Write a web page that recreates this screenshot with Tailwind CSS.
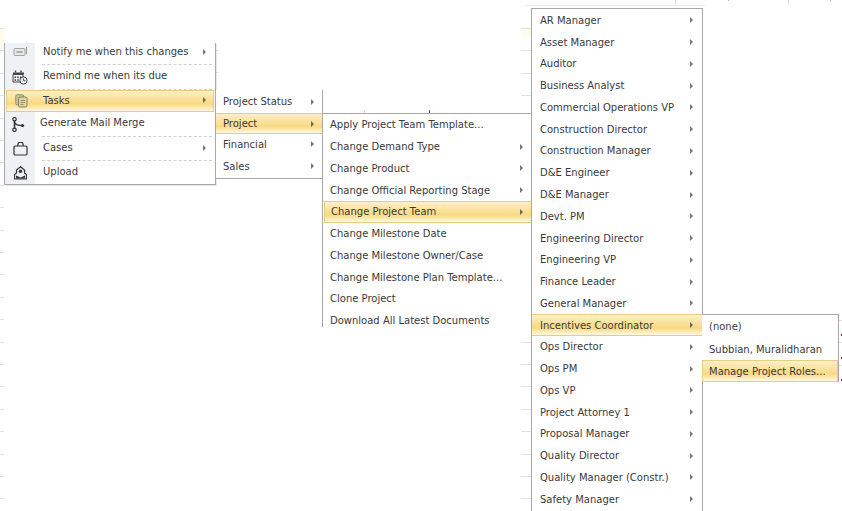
<!DOCTYPE html>
<html lang="en">
<head>
    <meta charset="UTF-8">
    <title>Context Menu</title>
    <script src="https://cdn.jsdelivr.net/npm/@tailwindcss/browser@4"></script>
</head>
<body class="bg-white w-[842px] h-[511px] overflow-hidden relative font-['DejaVu_Sans',sans-serif] text-[10px] text-[#3a3a3a]">

    <!-- bits of the grid behind the menus -->
    <div class="absolute left-0 top-[27px] w-[4px] h-[16px] bg-[#fffbea]"></div>
    <div class="absolute left-[521px] top-[27px] w-[10px] h-[10px] bg-[#fffbea]"></div>
    <div class="absolute left-0 top-[28px] w-[4px] h-[483px] bg-[repeating-linear-gradient(to_bottom,#e2e2e2_0,#e2e2e2_1px,transparent_1px,transparent_22.4px)]"></div>
    <div class="absolute left-[521px] top-[28px] w-[11px] h-[483px] bg-[repeating-linear-gradient(to_bottom,#e2e2e2_0,#e2e2e2_1px,transparent_1px,transparent_22.4px)]"></div>
    <div class="absolute left-[215px] top-[50px] w-[4px] h-[40px] bg-[repeating-linear-gradient(to_bottom,#e8e8e8_0,#e8e8e8_1px,transparent_1px,transparent_22px)]"></div>
    <div class="absolute left-[525px] top-[5px] w-[180px] h-px bg-[#ececec]"></div>
    <div class="absolute left-[675px] top-0 w-px h-[5px] bg-[#e2e2e2]"></div>
    <div class="absolute left-[728px] top-0 w-px h-[1px] bg-[#bbb]"></div>
    <div class="absolute left-[788px] top-0 w-px h-[5px] bg-[#e2e2e2]"></div>
    <div class="absolute left-[830px] top-0 w-px h-[1px] bg-[#bbb]"></div>
    <div class="absolute left-[364px] top-[110px] w-px h-[3px] bg-[#d8d8d8]"></div>
    <div class="absolute left-[429px] top-[110px] w-px h-[3px] bg-[#555]"></div>
    <div class="absolute left-[838px] top-[320px] w-[4px] h-px bg-[#e2e2e2]"></div>
    <div class="absolute left-[838px] top-[342px] w-[4px] h-px bg-[#e2e2e2]"></div>
    <div class="absolute left-[838px] top-[365px] w-[4px] h-px bg-[#e2e2e2]"></div>
    <div class="absolute left-[841px] top-[334px] w-px h-[2px] bg-[#7a2030]"></div>
    <div class="absolute left-[841px] top-[357px] w-px h-[2px] bg-[#7a2030]"></div>
    <div class="absolute left-[841px] top-[379px] w-px h-[2px] bg-[#7a2030]"></div>

    <!-- first menu -->
    <div class="absolute left-[4px] top-[43px] w-[212px] h-[142px] bg-white border-x border-b border-[#a8a8a8] shadow-[1px_1px_1px_rgba(0,0,0,0.08)] flex flex-col">
        <div class="h-[22px] flex">
            <div class="w-[30px] bg-[#eff1f5] flex items-center justify-center pb-[3px]">
                <svg width="15" height="11" viewBox="0 0 15 11" class="mt-[-2px]"><rect x="1" y="2.5" width="11" height="7" rx="1" fill="#e6e6e6" stroke="#a5a5a5"/><path d="M3.5 6h6" stroke="#888" stroke-width="1.2"/><path d="M13.5 1v7" stroke="#999"/></svg>
            </div>
            <div class="flex-1 ml-[7px] mr-[3px] pl-[1px] pr-[6px] pb-[4px] flex items-center justify-between border-b border-dashed border-[#d0d0d0]">
                <span>Notify me when this changes</span><span class="border-y-[3px] border-l-[3px] border-y-transparent border-l-[#777]"></span>
            </div>
        </div>
        <div class="h-[25px] flex">
            <div class="w-[30px] bg-[#eff1f5] flex items-center justify-center">
                <svg width="16" height="15" viewBox="0 0 16 15"><path d="M3.5 0.5v2M9 0.5v2" stroke="#444" stroke-width="1.4"/><path d="M1 2.5h11v2H1z" fill="#444"/><path d="M1 4.5h10v7.5H1z" fill="none" stroke="#444"/><path d="M2.5 6.5h1.6v1.6H2.5zM5.2 6.5h1.6v1.6H5.2zM7.9 6.5h1.6v1.6H7.9zM2.5 9.2h1.6v1.6H2.5zM5.2 9.2h1.6v1.6H5.2z" fill="#444"/><circle cx="11.5" cy="10.5" r="3.6" fill="#eff1f5" stroke="#444"/><path d="M11.5 8.5v2.2h2" stroke="#444" fill="none" stroke-width="0.9"/></svg>
            </div>
            <div class="flex-1 ml-[7px] mr-[3px] pl-[1px] pb-[4px] flex items-center border-b border-dashed border-[#d0d0d0]">Remind me when its due</div>
        </div>
        <div class="h-[22px] flex ml-px mr-px border border-[#e8cc80] bg-gradient-to-b from-[#fcf0c6] via-[#f9d981] via-65% to-[#fff8e4]">
            <div class="w-[28px] flex items-center justify-center">
                <svg width="13" height="14" viewBox="0 0 13 14"><rect x="0.8" y="0.8" width="8" height="10" rx="1.5" fill="#cfc6a0" stroke="#8d8a72"/><rect x="3.5" y="3" width="8.5" height="10" rx="1.5" fill="#e6d49a" stroke="#7f7c68"/><path d="M5.5 6.5h4.500M5.5 8.500h4.500M5.500 10.500h3" stroke="#7f7c68" stroke-width="0.8"/></svg>
            </div>
            <div class="flex-1 pl-[8px] pr-[7px] pb-[2px] flex items-center justify-between">
                <span>Tasks</span><span class="border-y-[3px] border-l-[3px] border-y-transparent border-l-[#666]"></span>
            </div>
        </div>
        <div class="h-[24px] flex">
            <div class="w-[30px] bg-[#eff1f5] flex items-center justify-center pr-[3px]">
                <svg width="13" height="15" viewBox="0 0 13 15"><circle cx="2.500" cy="2.200" r="1.700" fill="none" stroke="#333" stroke-width="1.200"/><circle cx="2.500" cy="12.800" r="1.700" fill="none" stroke="#333" stroke-width="1.200"/><path d="M2.500 3.500v8" stroke="#333" stroke-width="1.600"/><path d="M2.500 5.500c1 2.500 4 3 7.500 3" stroke="#333" stroke-width="1.400" fill="none"/><circle cx="10.600" cy="8.600" r="1.500" fill="#333"/></svg>
            </div>
            <div class="flex-1 ml-[5px] flex items-center pb-[4px]">Generate Mail Merge</div>
        </div>
        <div class="h-[25px] flex">
            <div class="w-[30px] bg-[#eff1f5] flex items-center justify-center">
                <svg width="15" height="15" viewBox="0 0 15 15"><rect x="1" y="5" width="13" height="9" rx="1.200" fill="none" stroke="#333" stroke-width="1.200"/><path d="M4.500 5l1-3.500h4l1 3.500" fill="none" stroke="#333" stroke-width="1.200"/></svg>
            </div>
            <div class="flex-1 ml-[7px] mr-[3px] pl-[1px] pr-[6px] pb-[2px] flex items-center justify-between border-y border-dashed border-[#d0d0d0]">
                <span>Cases</span><span class="border-y-[3px] border-l-[3px] border-y-transparent border-l-[#777]"></span>
            </div>
        </div>
        <div class="h-[23px] flex">
            <div class="w-[30px] bg-[#eff1f5] flex items-center justify-center">
                <svg width="13" height="14" viewBox="0 0 13 14"><path d="M6.500 0.800L10.500 4v3l2 1.500V13H0.500V8.500L2.500 7V4z" fill="none" stroke="#333" stroke-width="1.200"/><circle cx="6.500" cy="5.200" r="1.700" fill="#333"/><path d="M2 9.500l4.500 2 4.500-2v3H2z" fill="#333"/></svg>
            </div>
            <div class="flex-1 ml-[7px] pl-[1px] flex items-center pb-[3px]">Upload</div>
        </div>
    </div>

    <!-- second menu -->
    <div class="absolute left-[216px] top-[90px] w-[107px] h-[89px] bg-white border-r border-b border-[#a8a8a8] flex flex-col">
        <div class="h-[23px] flex items-center pl-[7px] pr-[8px] justify-between"><span>Project Status</span><span class="border-y-[3px] border-l-[3px] border-y-transparent border-l-[#777]"></span></div>
        <div class="h-[21px] flex items-center pl-[7px] pr-[8px] justify-between border-y border-[#e8cc80] bg-gradient-to-b from-[#fcf0c6] via-[#f9d981] via-65% to-[#fff8e4]"><span>Project</span><span class="border-y-[3px] border-l-[3px] border-y-transparent border-l-[#666]"></span></div>
        <div class="h-[22px] flex items-center pl-[7px] pr-[8px] pb-[2px] justify-between"><span>Financial</span><span class="border-y-[3px] border-l-[3px] border-y-transparent border-l-[#777]"></span></div>
        <div class="h-[22px] flex items-center pl-[7px] pr-[8px] pb-[2px] justify-between"><span>Sales</span><span class="border-y-[3px] border-l-[3px] border-y-transparent border-l-[#777]"></span></div>
    </div>

    <!-- third menu -->
    <div class="absolute left-[322px] top-[113px] w-[209px] h-[214px] bg-white border-l border-t border-[#a8a8a8] flex flex-col overflow-hidden">
        <div class="h-[21.800px] shrink-0 flex items-center pl-[7px]">Apply Project Team Template...</div>
        <div class="h-[21.800px] shrink-0 flex items-center pl-[7px] pr-[8px] justify-between"><span>Change Demand Type</span><span class="border-y-[3px] border-l-[3px] border-y-transparent border-l-[#777]"></span></div>
        <div class="h-[21.800px] shrink-0 flex items-center pl-[7px] pr-[8px] justify-between"><span>Change Product</span><span class="border-y-[3px] border-l-[3px] border-y-transparent border-l-[#777]"></span></div>
        <div class="h-[21.400px] shrink-0 flex items-center pl-[7px] pr-[8px] justify-between"><span>Change Official Reporting Stage</span><span class="border-y-[3px] border-l-[3px] border-y-transparent border-l-[#777]"></span></div>
        <div class="h-[21.800px] shrink-0 flex items-center ml-px pl-[6px] pr-[8px] justify-between border-y border-l border-[#e8cc80] bg-gradient-to-b from-[#fcf0c6] via-[#f9d981] via-65% to-[#fff8e4]"><span>Change Project Team</span><span class="border-y-[3px] border-l-[3px] border-y-transparent border-l-[#666]"></span></div>
        <div class="h-[21.800px] shrink-0 flex items-center pl-[7px]">Change Milestone Date</div>
        <div class="h-[21.800px] shrink-0 flex items-center pl-[7px]">Change Milestone Owner/Case</div>
        <div class="h-[21.800px] shrink-0 flex items-center pl-[7px]">Change Milestone Plan Template...</div>
        <div class="h-[21.800px] shrink-0 flex items-center pl-[7px]">Clone Project</div>
        <div class="h-[21.800px] shrink-0 flex items-center pl-[7px]">Download All Latest Documents</div>
    </div>

    <!-- fourth menu -->
    <div class="absolute left-[531px] top-[8px] w-[172px] h-[503px] bg-white border-x border-t border-[#a8a8a8] flex flex-col overflow-hidden pt-[0.500px]">
        <div class="h-[21.780px] shrink-0 flex items-center pl-[8px] pr-[9px] justify-between"><span>AR Manager</span><span class="border-y-[3px] border-l-[3px] border-y-transparent border-l-[#777]"></span></div>
        <div class="h-[21.780px] shrink-0 flex items-center pl-[8px] pr-[9px] justify-between"><span>Asset Manager</span><span class="border-y-[3px] border-l-[3px] border-y-transparent border-l-[#777]"></span></div>
        <div class="h-[21.780px] shrink-0 flex items-center pl-[8px] pr-[9px] justify-between"><span>Auditor</span><span class="border-y-[3px] border-l-[3px] border-y-transparent border-l-[#777]"></span></div>
        <div class="h-[21.780px] shrink-0 flex items-center pl-[8px] pr-[9px] justify-between"><span>Business Analyst</span><span class="border-y-[3px] border-l-[3px] border-y-transparent border-l-[#777]"></span></div>
        <div class="h-[21.780px] shrink-0 flex items-center pl-[8px] pr-[9px] justify-between"><span>Commercial Operations VP</span><span class="border-y-[3px] border-l-[3px] border-y-transparent border-l-[#777]"></span></div>
        <div class="h-[21.780px] shrink-0 flex items-center pl-[8px] pr-[9px] justify-between"><span>Construction Director</span><span class="border-y-[3px] border-l-[3px] border-y-transparent border-l-[#777]"></span></div>
        <div class="h-[21.780px] shrink-0 flex items-center pl-[8px] pr-[9px] justify-between"><span>Construction Manager</span><span class="border-y-[3px] border-l-[3px] border-y-transparent border-l-[#777]"></span></div>
        <div class="h-[21.780px] shrink-0 flex items-center pl-[8px] pr-[9px] justify-between"><span>D&amp;E Engineer</span><span class="border-y-[3px] border-l-[3px] border-y-transparent border-l-[#777]"></span></div>
        <div class="h-[21.780px] shrink-0 flex items-center pl-[8px] pr-[9px] justify-between"><span>D&amp;E Manager</span><span class="border-y-[3px] border-l-[3px] border-y-transparent border-l-[#777]"></span></div>
        <div class="h-[21.780px] shrink-0 flex items-center pl-[8px] pr-[9px] justify-between"><span>Devt. PM</span><span class="border-y-[3px] border-l-[3px] border-y-transparent border-l-[#777]"></span></div>
        <div class="h-[21.780px] shrink-0 flex items-center pl-[8px] pr-[9px] justify-between"><span>Engineering Director</span><span class="border-y-[3px] border-l-[3px] border-y-transparent border-l-[#777]"></span></div>
        <div class="h-[21.780px] shrink-0 flex items-center pl-[8px] pr-[9px] justify-between"><span>Engineering VP</span><span class="border-y-[3px] border-l-[3px] border-y-transparent border-l-[#777]"></span></div>
        <div class="h-[21.780px] shrink-0 flex items-center pl-[8px] pr-[9px] justify-between"><span>Finance Leader</span><span class="border-y-[3px] border-l-[3px] border-y-transparent border-l-[#777]"></span></div>
        <div class="h-[21.780px] shrink-0 flex items-center pl-[8px] pr-[9px] justify-between"><span>General Manager</span><span class="border-y-[3px] border-l-[3px] border-y-transparent border-l-[#777]"></span></div>
        <div class="h-[21.780px] shrink-0 flex items-center pl-[8px] pr-[9px] justify-between border-y border-[#e8cc80] bg-gradient-to-b from-[#fcf0c6] via-[#f9d981] via-65% to-[#fff8e4]"><span>Incentives Coordinator</span><span class="border-y-[3px] border-l-[3px] border-y-transparent border-l-[#666]"></span></div>
        <div class="h-[21.780px] shrink-0 flex items-center pl-[8px] pr-[9px] justify-between"><span>Ops Director</span><span class="border-y-[3px] border-l-[3px] border-y-transparent border-l-[#777]"></span></div>
        <div class="h-[21.780px] shrink-0 flex items-center pl-[8px] pr-[9px] justify-between"><span>Ops PM</span><span class="border-y-[3px] border-l-[3px] border-y-transparent border-l-[#777]"></span></div>
        <div class="h-[21.780px] shrink-0 flex items-center pl-[8px] pr-[9px] justify-between"><span>Ops VP</span><span class="border-y-[3px] border-l-[3px] border-y-transparent border-l-[#777]"></span></div>
        <div class="h-[21.780px] shrink-0 flex items-center pl-[8px] pr-[9px] justify-between"><span>Project Attorney 1</span><span class="border-y-[3px] border-l-[3px] border-y-transparent border-l-[#777]"></span></div>
        <div class="h-[21.780px] shrink-0 flex items-center pl-[8px] pr-[9px] justify-between"><span>Proposal Manager</span><span class="border-y-[3px] border-l-[3px] border-y-transparent border-l-[#777]"></span></div>
        <div class="h-[21.780px] shrink-0 flex items-center pl-[8px] pr-[9px] justify-between"><span>Quality Director</span><span class="border-y-[3px] border-l-[3px] border-y-transparent border-l-[#777]"></span></div>
        <div class="h-[21.780px] shrink-0 flex items-center pl-[8px] pr-[9px] justify-between"><span>Quality Manager (Constr.)</span><span class="border-y-[3px] border-l-[3px] border-y-transparent border-l-[#777]"></span></div>
        <div class="h-[21.780px] shrink-0 flex items-center pl-[8px] pr-[9px] justify-between"><span>Safety Manager</span><span class="border-y-[3px] border-l-[3px] border-y-transparent border-l-[#777]"></span></div>
    </div>

    <!-- fifth menu -->
    <div class="absolute left-[702px] top-[314px] w-[137px] h-[68px] bg-white border-t border-r border-[#a8a8a8] flex flex-col">
        <div class="h-[23px] flex items-center pl-[7px]">(none)</div>
        <div class="h-[22px] flex items-center pl-[7px]">Subbian, Muralidharan</div>
        <div class="h-[22px] flex items-center pl-[6px] border border-[#e8cc80] bg-gradient-to-b from-[#fcf0c6] via-[#f9d981] via-65% to-[#fff8e4]">Manage Project Roles...</div>
    </div>
</body>
</html>
